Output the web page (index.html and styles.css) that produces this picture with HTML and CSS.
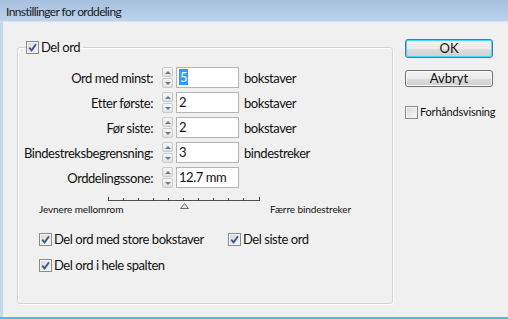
FILE: index.html
```html
<!DOCTYPE html>
<html lang="no">
<head>
<meta charset="utf-8">
<title>Innstillinger for orddeling</title>
<link rel="stylesheet" href="styles.css">
</head>
<body>
<div class="window">
  <div class="titlebar">Innstillinger for orddeling</div>
  <div class="client">
    <fieldset class="group">
      <legend class="legend">
        <span class="chk"><span class="box"><svg viewBox="0 0 11 11" width="11" height="11"><path d="M2.2 5.6 L4.6 8.4 L9 2.2" fill="none" stroke="#3f5a93" stroke-width="1.9"/></svg></span>Del ord</span>
      </legend>
      <div class="fields">
        <div class="row">
          <span class="lbl">Ord med minst:</span>
          <span class="spin"><span class="sb up"></span><span class="sb down"></span></span>
          <span class="inp"><span class="sel">5</span></span>
          <span class="unit">bokstaver</span>
        </div>
        <div class="row">
          <span class="lbl">Etter første:</span>
          <span class="spin"><span class="sb up"></span><span class="sb down"></span></span>
          <span class="inp">2</span>
          <span class="unit">bokstaver</span>
        </div>
        <div class="row">
          <span class="lbl">Før siste:</span>
          <span class="spin"><span class="sb up"></span><span class="sb down"></span></span>
          <span class="inp">2</span>
          <span class="unit">bokstaver</span>
        </div>
        <div class="row">
          <span class="lbl">Bindestreksbegrensning:</span>
          <span class="spin"><span class="sb up"></span><span class="sb down"></span></span>
          <span class="inp">3</span>
          <span class="unit">bindestreker</span>
        </div>
        <div class="row">
          <span class="lbl">Orddelingssone:</span>
          <span class="spin"><span class="sb up"></span><span class="sb down"></span></span>
          <span class="inp">12.7 mm</span>
        </div>
      </div>
      <div class="slider">
        <div class="track">
          <svg width="152" height="4" viewBox="0 0 152 4">
            <line x1="0" y1="3.5" x2="152" y2="3.5" stroke="#505050" stroke-width="1"/>
            <g stroke="#404040" stroke-width="1">
              <line x1="0.5" y1="0" x2="0.5" y2="4"/>
              <line x1="15.5" y1="1" x2="15.5" y2="4"/>
              <line x1="30.5" y1="1" x2="30.5" y2="4"/>
              <line x1="45.5" y1="1" x2="45.5" y2="4"/>
              <line x1="60.5" y1="1" x2="60.5" y2="4"/>
              <line x1="75.5" y1="1" x2="75.5" y2="4"/>
              <line x1="90.5" y1="1" x2="90.5" y2="4"/>
              <line x1="105.5" y1="1" x2="105.5" y2="4"/>
              <line x1="120.5" y1="1" x2="120.5" y2="4"/>
              <line x1="135.5" y1="1" x2="135.5" y2="4"/>
              <line x1="151.5" y1="0" x2="151.5" y2="4"/>
            </g>
          </svg>
          <svg class="thumb" width="9" height="6" viewBox="0 0 9 6"><path d="M0.5 5.5 L4.5 0.5 L8.5 5.5 Z" fill="#e6e6e6" stroke="#6a6a6a" stroke-width="1"/></svg>
        </div>
        <div class="ends">
          <span>Jevnere mellomrom</span>
          <span>Færre bindestreker</span>
        </div>
      </div>
      <div class="opts">
        <div class="optrow">
          <span class="chk wide"><span class="box"><svg viewBox="0 0 11 11" width="11" height="11"><path d="M2.2 5.6 L4.6 8.4 L9 2.2" fill="none" stroke="#3f5a93" stroke-width="1.9"/></svg></span>Del ord med store bokstaver</span>
          <span class="chk"><span class="box"><svg viewBox="0 0 11 11" width="11" height="11"><path d="M2.2 5.6 L4.6 8.4 L9 2.2" fill="none" stroke="#3f5a93" stroke-width="1.9"/></svg></span>Del siste ord</span>
        </div>
        <div class="optrow">
          <span class="chk"><span class="box"><svg viewBox="0 0 11 11" width="11" height="11"><path d="M2.2 5.6 L4.6 8.4 L9 2.2" fill="none" stroke="#3f5a93" stroke-width="1.9"/></svg></span>Del ord i hele spalten</span>
        </div>
      </div>
    </fieldset>
    <div class="buttons">
      <button class="btn default" type="button">OK</button>
      <button class="btn" type="button">Avbryt</button>
      <span class="chk small"><span class="box"></span>Forhåndsvisning</span>
    </div>
  </div>
</div>
</body>
</html>
```
FILE: styles.css
```css
* { box-sizing: border-box; }
html, body { margin: 0; padding: 0; }
body {
  width: 508px;
  height: 319px;
  overflow: hidden;
  font-family: Lato, "Liberation Sans", sans-serif;
  font-size: 13px;
  letter-spacing: -0.45px;
  color: #111;
  background: #f0f0f0;
}
.window {
  width: 508px;
  height: 319px;
  display: flex;
  flex-direction: column;
  border-bottom: 2px solid #3cc1ea;
}
.titlebar {
  height: 22px;
  flex: none;
  padding-left: 6px;
  line-height: 23px;
  font-size: 12px;
  letter-spacing: -0.6px;
  color: #1a1a1a;
  background: linear-gradient(#a6c0de, #bcd2ea);
  border-bottom: 1px solid #d6e2ef;
}
.client {
  flex: 1;
  display: flex;
  align-items: flex-start;
  padding: 18px 0 0 14px;
  border-left: 3px solid #c5d9ee;
}
.group {
  margin: 0;
  padding: 0 0 31px 0;
  width: 376px;
  border: 1px solid #d3d3d3;
  border-radius: 3px;
  box-shadow: inset 1px 1px 0 #fff, 1px 1px 0 #fff;
  min-width: 0;
}
.legend {
  margin-left: 8px;
  padding: 0 3px 0 0;
  height: 14px;
  line-height: 14px;
}
.chk {
  display: inline-flex;
  align-items: center;
  height: 14px;
  line-height: 14px;
  white-space: nowrap;
}
.box {
  width: 13px;
  height: 13px;
  flex: none;
  margin-right: 2px;
  border: 1px solid #8b8b8b;
  background: linear-gradient(135deg, #d8d8d8, #f8f8f8);
  box-shadow: inset 0 0 0 1px #f4f4f4;
  display: inline-flex;
  align-items: center;
  justify-content: center;
}
.fields {
  margin-top: 13px;
  display: flex;
  flex-direction: column;
  gap: 4px;
}
.row {
  display: flex;
  align-items: center;
  height: 21px;
}
.lbl {
  width: 135px;
  text-align: right;
  white-space: nowrap;
}
.spin {
  margin-left: 9px;
  width: 11px;
  height: 21px;
  display: flex;
  flex-direction: column;
  gap: 1px;
}
.sb {
  flex: 1;
  border: 1px solid #cacaca;
  border-radius: 2px;
  background: linear-gradient(#f6f6f6, #e2e2e2);
  display: flex;
  align-items: center;
  justify-content: center;
}
.sb.up::after {
  content: "";
  border-left: 3px solid transparent;
  border-right: 3px solid transparent;
  border-bottom: 3px solid #6c7a88;
}
.sb.down::after {
  content: "";
  border-left: 3px solid transparent;
  border-right: 3px solid transparent;
  border-top: 3px solid #6c7a88;
}
.inp {
  margin-left: 3px;
  width: 63px;
  height: 21px;
  border: 1px solid #b4b4b4;
  background: #fff;
  padding-left: 2px;
  line-height: 19px;
  white-space: nowrap;
}
.sel {
  background: #3399ff;
  color: #fff;
  padding: 0 1px;
}
.unit {
  margin-left: 5px;
  white-space: nowrap;
}
.slider {
  margin: 9px 0 0 21px;
  width: 312px;
}
.track {
  position: relative;
  margin-left: 69px;
  width: 152px;
  height: 4px;
}
.track svg { display: block; }
.track .thumb {
  position: absolute;
  left: 72px;
  top: 6px;
}
.ends {
  display: flex;
  justify-content: space-between;
  font-size: 10px;
  letter-spacing: -0.1px;
  line-height: 12px;
  margin-top: 2px;
}
.opts {
  margin: 17px 0 0 21px;
  display: flex;
  flex-direction: column;
  gap: 12px;
}
.optrow {
  display: flex;
  height: 14px;
}
.wide { width: 189px; }
.buttons {
  margin: -1px 0 0 12px;
  width: 88px;
  display: flex;
  flex-direction: column;
}
.btn {
  font-family: inherit;
  font-size: 13px;
  letter-spacing: 0;
  color: #111;
  width: 88px;
  height: 17px;
  padding: 0;
  line-height: 15px;
  border: 1px solid #707070;
  border-radius: 3px;
  background: linear-gradient(#f2f2f2 0%, #ebebeb 50%, #dddddd 51%, #cfcfcf 100%);
  box-shadow: inset 0 0 0 1px #fbfbfb;
  margin-bottom: 13px;
}
.btn.default {
  height: 19px;
  border-color: #3c7fb1;
  box-shadow: inset 0 0 0 1px #48d4fb;
  margin-bottom: 12px;
}
.chk.small {
  margin-top: 5px;
  font-size: 11px;
  letter-spacing: -0.2px;
}
```
